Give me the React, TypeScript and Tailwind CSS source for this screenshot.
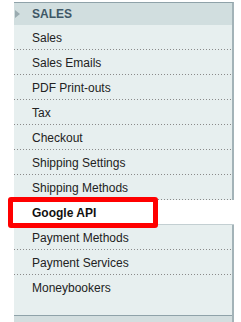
import React from "react";

const items = [
  "Sales",
  "Sales Emails",
  "PDF Print-outs",
  "Tax",
  "Checkout",
  "Shipping Settings",
  "Shipping Methods",
  "Google API",
  "Payment Methods",
  "Payment Services",
  "Moneybookers",
];

export default function App() {
  return (
    <div
      className="relative w-[241px] h-[322px] bg-white overflow-hidden pt-[2px]"
      style={{ fontFamily: '"Liberation Sans", Arial, sans-serif' }}
    >
      <div className="ml-[14px] w-[220px]">
        <div className="h-[23px] border-t border-[#8fa2a9] bg-[#d1dedf] border-r-2 border-r-[#a3b3b8] flex items-center">
          <svg width="18" height="22" viewBox="0 0 18 22" className="shrink-0">
            <polygon points="1,7 1,15 6,11" fill="#9aabb0" />
          </svg>
          <span className="text-[12px] font-bold text-[#3e5766] leading-none">SALES</span>
        </div>
        {items.map((label, i) => {
          const selected = label === "Google API";
          const last = i === items.length - 1;
          const nextSelected = items[i + 1] === "Google API";
          if (selected) {
            return (
              <div
                key={label}
                className="h-[25px] bg-white border-b border-b-[#c3cfd2] flex items-center pt-[1px] pl-[18px] text-[12px] font-bold text-[#111]"
              >
                {label}
              </div>
            );
          }
          return (
            <div key={label} className="bg-[#e7efef] border-r-2 border-r-[#a3b3b8]">
              <div className="h-[24px] flex items-center pt-[2px] pl-[18px] text-[12px] text-[#222]">
                {label}
              </div>
              {last ? (
                <div className="h-[17px] border-b border-b-[#8fa2a9]" />
              ) : (
                <div
                  className={
                    nextSelected
                      ? "h-px bg-[repeating-linear-gradient(to_right,#8a8a8a_0px,#8a8a8a_1px,transparent_1px,transparent_3px)]"
                      : "h-px bg-[repeating-linear-gradient(to_right,#8a8a8a_0px,#8a8a8a_1px,transparent_1px,transparent_3px)]"
                  }
                />
              )}
            </div>
          );
        })}
        <div className="h-[10px] bg-[#d3dedf] border-r-2 border-r-[#a3b3b8]" />
      </div>
      <div className="absolute left-[8px] top-[197px] w-[150px] h-[31px] border-[5px] border-[#ff0000] rounded-[3px]" />
    </div>
  );
}
